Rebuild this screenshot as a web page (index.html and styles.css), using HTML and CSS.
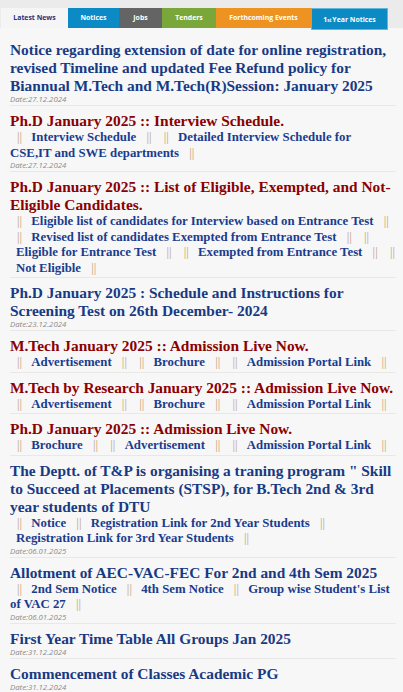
FILE: index.html
```html
<!DOCTYPE html>
<html lang="en">
<head>
<meta charset="utf-8">
<title>Latest News</title>
<link rel="stylesheet" href="styles.css">
</head>
<body>
<div class="tabs">
  <div class="tab tab-news">Latest News</div>
  <div class="tab tab-notices">Notices</div>
  <div class="tab tab-jobs">Jobs</div>
  <div class="tab tab-tenders">Tenders</div>
  <div class="tab tab-events">Forthcoming Events</div>
  <div class="tab tab-first">1<sup>st</sup> Year Notices</div>
</div>
<div class="panel">
  <div class="item">
    <h6 class="head blue">Notice regarding extension of date for online registration, revised Timeline and updated Fee Refund policy for Biannual M.Tech and M.Tech(R)Session: January 2025</h6>
    <div class="date">Date:27.12.2024</div>
  </div>
  <div class="item">
    <h6 class="head red">Ph.D January 2025 :: Interview Schedule.</h6>
    <div class="links"><span class="sep">||</span> <a class="lk">Interview Schedule</a> <span class="sep end">||</span> <span class="sep">||</span> <a class="lk">Detailed Interview Schedule for<br>CSE,IT and SWE departments</a> <span class="sep">||</span></div>
    <div class="date">Date:27.12.2024</div>
  </div>
  <div class="item">
    <h6 class="head red">Ph.D January 2025 :: List of Eligible, Exempted, and Not-Eligible Candidates.</h6>
    <div class="links"><span class="sep">||</span> <a class="lk">Eligible list of candidates for Interview based on Entrance Test</a> <span class="sep end">||</span> <span class="sep">||</span> <a class="lk">Revised list of candidates Exempted from Entrance Test</a> <span class="sep end">||</span> <span class="sep">||</span> <a class="lk">Eligible for Entrance Test</a> <span class="sep end">||</span> <span class="sep">||</span> <a class="lk">Exempted from Entrance Test</a> <span class="sep end">||</span> <span class="sep">||</span> <a class="lk">Not Eligible</a> <span class="sep">||</span></div>
  </div>
  <div class="item">
    <h6 class="head blue">Ph.D January 2025 : Schedule and Instructions for Screening Test on 26th December- 2024</h6>
    <div class="date">Date:23.12.2024</div>
  </div>
  <div class="item">
    <h6 class="head red">M.Tech January 2025 :: Admission Live Now.</h6>
    <div class="links"><span class="sep">||</span> <a class="lk">Advertisement</a> <span class="sep end">||</span> <span class="sep">||</span> <a class="lk">Brochure</a> <span class="sep end">||</span> <span class="sep">||</span> <a class="lk">Admission Portal Link</a> <span class="sep">||</span></div>
  </div>
  <div class="item">
    <h6 class="head red">M.Tech by Research January 2025 :: Admission Live Now.</h6>
    <div class="links"><span class="sep">||</span> <a class="lk">Advertisement</a> <span class="sep end">||</span> <span class="sep">||</span> <a class="lk">Brochure</a> <span class="sep end">||</span> <span class="sep">||</span> <a class="lk">Admission Portal Link</a> <span class="sep">||</span></div>
  </div>
  <div class="item">
    <h6 class="head red">Ph.D January 2025 :: Admission Live Now.</h6>
    <div class="links"><span class="sep">||</span> <a class="lk">Brochure</a> <span class="sep end">||</span> <span class="sep">||</span> <a class="lk">Advertisement</a> <span class="sep end">||</span> <span class="sep">||</span> <a class="lk">Admission Portal Link</a> <span class="sep">||</span></div>
  </div>
  <div class="item">
    <h6 class="head blue">The Deptt. of T&amp;P is organising a traning program " Skill to Succeed at Placements (STSP), for B.Tech 2nd &amp; 3rd year students of DTU</h6>
    <div class="links"><span class="sep">||</span> <a class="lk">Notice</a> <span class="sep">||</span> <a class="lk">Registration Link for 2nd Year Students</a> <span class="sep">||</span> <a class="lk">Registration Link for 3rd Year Students</a> <span class="sep">||</span></div>
    <div class="date">Date:06.01.2025</div>
  </div>
  <div class="item">
    <h6 class="head blue">Allotment of AEC-VAC-FEC For 2nd and 4th Sem 2025</h6>
    <div class="links"><span class="sep">||</span> <a class="lk">2nd Sem Notice</a> <span class="sep">||</span> <a class="lk">4th Sem Notice</a> <span class="sep">||</span> <a class="lk">Group wise Student's List of VAC 27</a> <span class="sep">||</span></div>
    <div class="date">Date:06.01.2025</div>
  </div>
  <div class="item">
    <h6 class="head blue">First Year Time Table All Groups Jan 2025</h6>
    <div class="date">Date:31.12.2024</div>
  </div>
  <div class="item">
    <h6 class="head blue">Commencement of Classes Academic PG</h6>
    <div class="date">Date:31.12.2024</div>
  </div>
</div>
</body>
</html>
```

FILE: styles.css
```css
html, body {
  margin: 0;
  padding: 0;
  background: #f7f7f7;
}
body {
  width: 403px;
  overflow: hidden;
}
.tabs {
  display: flex;
  align-items: flex-start;
  background: #ebebeb;
  padding: 8px 0 0 1px;
  height: 20px;
}
.tab {
  height: 19.5px;
  display: flex;
  align-items: center;
  justify-content: center;
  font-family: "Open Sans", "DejaVu Sans", sans-serif;
  font-weight: 700;
  font-size: 6.9px;
  color: #ffffff;
  box-sizing: border-box;
}
.tab-news { width: 67px; background: #f5f5f5; color: #2a2f78; }
.tab-notices { width: 51px; background: #0b8ac6; }
.tab-jobs { width: 43px; background: #646464; }
.tab-tenders { width: 54px; background: #7aa73a; }
.tab-events { width: 95px; background: #ee9322; }
.tab-first {
  width: 77px;
  height: 21.5px;
  background: #0b8ac4;
  border: 1px solid #62b6de;
  padding-top: 2px;
}
.tab-first sup {
  font-size: 4.5px;
  line-height: 0;
  vertical-align: 3px;
  margin-right: 1px;
}
.panel {
  background: #f7f7f7;
  padding: 7px 7px 0 10px;
}
.item {
  padding: 6px 0 1px;
  border-bottom: 1px solid #e8e8e8;
}
.head {
  margin: 0;
  font-family: "Liberation Serif", "Times New Roman", serif;
  font-weight: 700;
  font-size: 15.4px;
  line-height: 18px;
}
.blue { color: #183a84; }
.red { color: #8b0000; }
.links {
  font-family: "Liberation Serif", "Times New Roman", serif;
  font-size: 12.8px;
  line-height: 15.5px;
}
.lk {
  font-weight: 700;
  color: #1a3c8e;
  margin-left: 6px;
}
.sep {
  color: #bf9f78;
  margin-left: 7px;
}
.sep.end {
  margin-right: 2px;
}
.date {
  font-family: "Open Sans", "DejaVu Sans", sans-serif;
  font-style: italic;
  font-size: 7.8px;
  line-height: 6.5px;
  color: #8a8a8a;
  margin: 1px 0 1.5px;
}
```
